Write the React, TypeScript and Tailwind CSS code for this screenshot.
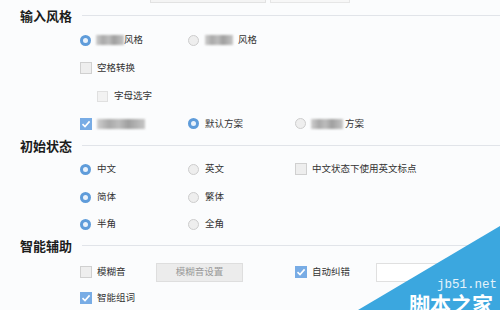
import React from "react";

const font = { fontFamily: '"Noto Sans CJK SC", "Noto Sans", sans-serif' };

function Radio({ checked }: { checked?: boolean }) {
  return checked ? (
    <span className="flex h-[11px] w-[11px] shrink-0 items-center justify-center rounded-full bg-[#5f9cda]">
      <span className="h-[5px] w-[5px] rounded-full bg-[#eaf2fb]" />
    </span>
  ) : (
    <span className="h-[11px] w-[11px] shrink-0 rounded-full border border-[#cdcdcd] bg-[#eeeeee]" />
  );
}

function Check({ checked, faint }: { checked?: boolean; faint?: boolean }) {
  if (checked)
    return (
      <span className="flex h-[12px] w-[12px] shrink-0 items-center justify-center bg-[#78ace5]">
        <svg width="10" height="10" viewBox="0 0 10 10">
          <path d="M1.5 5.2 L4 7.6 L8.6 2.4" fill="none" stroke="#ffffff" strokeWidth="1.6" />
        </svg>
      </span>
    );
  return (
    <span
      className={
        faint
          ? "h-[11px] w-[11px] shrink-0 border border-[#e0e0e0] bg-[#f2f2f2]"
          : "h-[12px] w-[12px] shrink-0 border border-[#d0d0d0] bg-[#eeeeee]"
      }
    />
  );
}

function Blur({ w }: { w: number }) {
  return (
    <span
      className="inline-block h-[10px] shrink-0 bg-[linear-gradient(90deg,#cfcfcf_0%,#a9a9a9_25%,#bdbdbd_45%,#9f9f9f_65%,#c6c6c6_100%)] blur-[0.8px]"
      style={{ width: w }}
    />
  );
}

function Header({ title, h }: { title: string; h: string }) {
  return (
    <div className={`flex items-center ${h}`}>
      <span className="ml-[20px] w-[62px] text-[13px] font-bold leading-none text-[#1c1c1c]">{title}</span>
      <span className="h-px flex-1 bg-[#e1e4e9]" />
    </div>
  );
}

const txt = "text-[9.5px] leading-none text-[#333333]";

export default function App() {
  return (
    <div className="relative h-[310px] w-[500px] overflow-hidden bg-[#fbfcfd]" style={font}>
      {/* top partial inputs */}
      <div className="flex h-[3px] pl-[150px]">
        <div className="w-[116px] border-x border-b border-[#e2e2e2] bg-[#f4f4f4]" />
        <div className="ml-[4px] w-[80px] border-x border-b border-[#e6e6e6] bg-[#f7f7f7]" />
      </div>
      <div className="h-[1px]" />

      <Header title="输入风格" h="h-[22px]" />

      <div className="flex h-[28px] items-center pl-[80px]">
        <div className="flex w-[108px] items-center">
          <Radio checked />
          <span className="ml-[5px] flex items-center">
            <Blur w={28} />
            <span className={txt}>风格</span>
          </span>
        </div>
        <div className="flex items-center">
          <Radio />
          <span className="ml-[6px] flex items-center">
            <Blur w={28} />
            <span className={`${txt} ml-[5px]`}>风格</span>
          </span>
        </div>
      </div>

      <div className="flex h-[28px] items-center pl-[80px]">
        <Check />
        <span className={`${txt} ml-[5px]`}>空格转换</span>
      </div>

      <div className="flex h-[28px] items-center pl-[97px]">
        <Check faint />
        <span className={`${txt} ml-[6px]`}>字母选字</span>
      </div>

      <div className="flex h-[27px] items-center pl-[80px]">
        <div className="flex w-[108px] items-center">
          <Check checked />
          <span className="ml-[5px] flex">
            <Blur w={48} />
          </span>
        </div>
        <div className="flex w-[107px] items-center">
          <Radio checked />
          <span className={`${txt} ml-[6px]`}>默认方案</span>
        </div>
        <div className="flex items-center">
          <Radio />
          <span className="ml-[5px] flex items-center">
            <Blur w={32} />
            <span className={`${txt} ml-[2px]`}>方案</span>
          </span>
        </div>
      </div>

      <Header title="初始状态" h="h-[16px]" />
      <div className="h-[2px]" />

      {[
        ["中文", "英文"],
        ["简体", "繁体"],
        ["半角", "全角"],
      ].map(([a, b], i) => (
        <div key={a} className={`flex items-center pl-[80px] ${i === 2 ? "h-[26px]" : "h-[28px]"}`}>
          <div className="flex w-[108px] items-center">
            <Radio checked />
            <span className={`${txt} ml-[6px]`}>{a}</span>
          </div>
          <div className="flex w-[107px] items-center">
            <Radio />
            <span className={`${txt} ml-[6px]`}>{b}</span>
          </div>
          {i === 0 && (
            <div className="flex items-center">
              <Check />
              <span className={`${txt} ml-[5px]`}>中文状态下使用英文标点</span>
            </div>
          )}
        </div>
      ))}

      <Header title="智能辅助" h="h-[16px]" />

      <div className="mt-[5px] flex h-[28px] items-center pl-[80px]">
        <div className="flex w-[76px] items-center">
          <Check />
          <span className={`${txt} ml-[5px]`}>模糊音</span>
        </div>
        <div className="flex h-[19px] w-[87px] items-center justify-center border border-[#dedede] bg-[#ececec]">
          <span className="text-[9.5px] leading-none text-[#9a9a9a]">模糊音设置</span>
        </div>
        <div className="ml-[52px] flex w-[81px] items-center">
          <Check checked />
          <span className={`${txt} ml-[5px]`}>自动纠错</span>
        </div>
        <div className="h-[19px] w-[90px] border border-[#e0e0e0] bg-white" />
      </div>

      <div className="flex h-[24px] items-center pl-[80px]">
        <Check checked />
        <span className={`${txt} ml-[5px]`}>智能组词</span>
      </div>

      {/* watermark */}
      <svg className="absolute left-0 top-0" width="500" height="310" viewBox="0 0 500 310">
        <polygon points="358,310 500,226 500,310" fill="#3ba7df" />
      </svg>
      <div
        className="absolute left-[437px] top-[279px] text-[12.5px] leading-none text-[#e4f3fb]"
        style={{ fontFamily: '"Liberation Mono", monospace' }}
      >
        jb51.net
      </div>
      <div className="absolute left-[409px] top-[293px] text-[21px] font-bold leading-none text-white">脚本之家</div>
    </div>
  );
}
